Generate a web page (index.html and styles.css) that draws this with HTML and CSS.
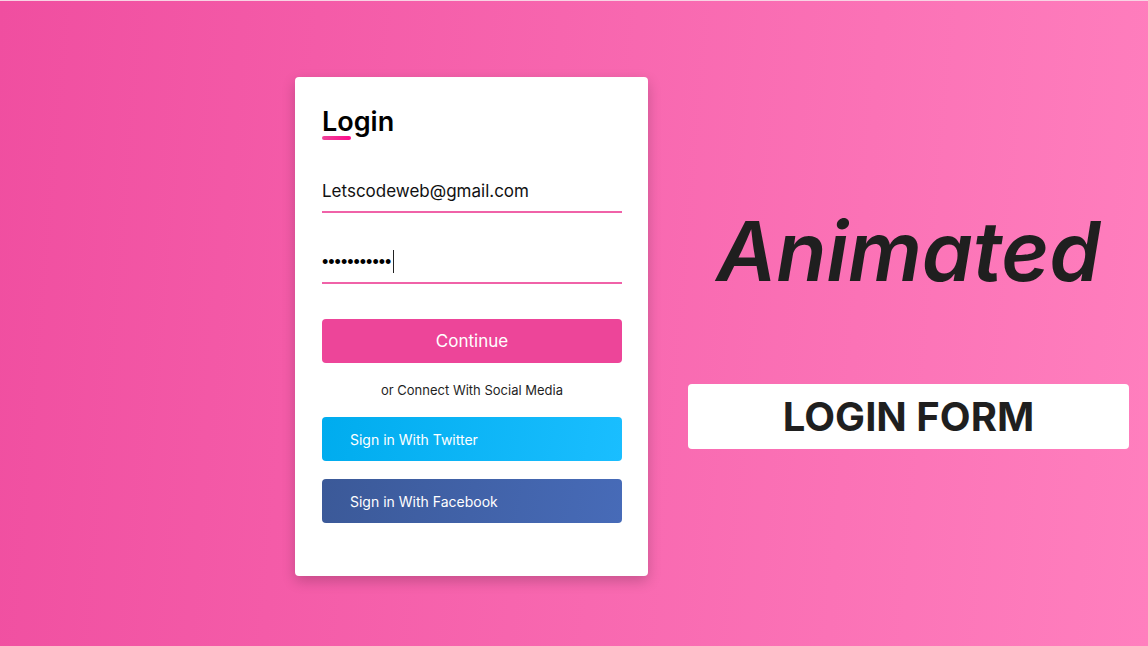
FILE: index.html
```html
<!DOCTYPE html>
<html lang="en">
<head>
<meta charset="utf-8">
<meta name="viewport" content="width=device-width, initial-scale=1">
<title>Animated Login Form</title>
<link rel="stylesheet" href="styles.css">
</head>
<body>
<main class="page">
  <form class="card">
    <h1 class="card-title">Login</h1>
    <div class="field">
      <input class="field-input" type="email" aria-label="Email" value="Letscodeweb@gmail.com">
    </div>
    <div class="field">
      <input class="field-input field-password" type="password" aria-label="Password" value="letscodeweb">
      <span class="caret"></span>
    </div>
    <button class="btn btn-continue" type="button">Continue</button>
    <p class="divider">or Connect With Social Media</p>
    <button class="btn btn-social btn-twitter" type="button">Sign in With Twitter</button>
    <button class="btn btn-social btn-facebook" type="button">Sign in With Facebook</button>
  </form>
  <section class="hero">
    <p class="hero-script">Animated</p>
    <h2 class="hero-banner">LOGIN FORM</h2>
  </section>
</main>
</body>
</html>
```
FILE: styles.css
```css
* {
  box-sizing: border-box;
}

body {
  margin: 0;
  font-family: Inter, "Open Sans", sans-serif;
  color: #1f1f1f;
}

.page {
  display: flex;
  justify-content: flex-end;
  align-items: center;
  gap: 40px;
  min-height: 100vh;
  padding: 76px 19px 70px;
  border-top: 1px solid #f8d3e4;
  background: linear-gradient(95deg, #f04ea0, #ff7fbe);
}

.card {
  display: flex;
  flex-direction: column;
  flex: 0 1 353px;
  padding: 27px 26px 53px 27px;
  border-radius: 4px;
  background: #fff;
  box-shadow: 0 5px 14px rgba(0, 0, 0, 0.2);
}

.card-title {
  position: relative;
  align-self: flex-start;
  margin: 0 0 29px;
  font-size: 27px;
  line-height: 36px;
  font-weight: 600;
  color: #000;
}

.card-title::before {
  content: "";
  position: absolute;
  left: 0;
  bottom: 0;
  width: 29px;
  height: 4px;
  border-radius: 2px;
  background: linear-gradient(to right, #ed4599, #ff0a8c);
}

.field {
  position: relative;
  margin-bottom: 27px;
}

.field-input {
  display: block;
  width: 100%;
  height: 44px;
  padding: 2px 0 0;
  border: 0;
  border-bottom: 2px solid #f062a8;
  outline: 0;
  background: transparent;
  font-family: inherit;
  font-size: 17px;
  color: #111;
}

.field-password {
  font-family: "Liberation Sans", sans-serif;
  font-size: 18px;
  color: #000;
}

.caret {
  position: absolute;
  left: 71px;
  top: 10px;
  width: 1px;
  height: 23px;
  background: #222;
}

.btn {
  height: 44px;
  border: 0;
  border-radius: 4px;
  font-family: inherit;
  color: #fff;
}

.btn-continue {
  margin-top: 8px;
  background: #ed4599;
  font-size: 17px;
}

.divider {
  margin: 17px 0;
  font-size: 13px;
  line-height: 20px;
  text-align: center;
}

.btn-social {
  padding: 0 28px;
  font-size: 14px;
  text-align: left;
}

.btn-twitter {
  background: linear-gradient(100deg, #00acee, #1abeff);
}

.btn-facebook {
  margin-top: 18px;
  background: linear-gradient(100deg, #3b5998, #476bb8);
}

.hero {
  display: flex;
  flex-direction: column;
  gap: 84px;
  flex: 0 1 441px;
  text-align: center;
}

.hero-script {
  margin: 0;
  font-size: 82px;
  line-height: 96px;
  font-weight: 600;
  font-style: italic;
}

.hero-banner {
  margin: 0;
  padding: 8px;
  border-radius: 4px;
  background: #fff;
  font-size: 40px;
  line-height: 49px;
  font-weight: 700;
}
```
